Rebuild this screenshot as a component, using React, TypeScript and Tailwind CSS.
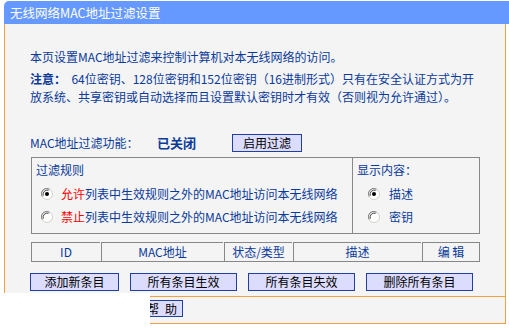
const Radio = ({ checked }: { checked?: boolean }) => (
  <svg width="12" height="12" viewBox="0 0 12 12" className="shrink-0">
    <circle cx="6" cy="6" r="5.5" fill="#ffffff" stroke="#d4d0c8" />
    <path d="M1.2 8.5 A5.3 5.3 0 0 1 8.5 1.2" fill="none" stroke="#808080" strokeWidth="1" />
    <path d="M2.3 7.6 A4.2 4.2 0 0 1 7.6 2.3" fill="none" stroke="#404040" strokeWidth="1" />
    {checked && <circle cx="6" cy="6" r="2" fill="#000000" />}
  </svg>
);

const Btn = ({ w, children }: { w: string; children: React.ReactNode }) => (
  <button
    type="button"
    className={`${w} h-[18px] shrink-0 border border-[#1f3fa3] bg-[#dcdcfe] text-black text-[12px] leading-[16px] text-center`}
  >
    {children}
  </button>
);

export default function App() {
  const cols = [
    { label: "ID", w: "w-[69px]" },
    { label: "MAC地址", w: "w-[122px]" },
    { label: "状态/类型", w: "w-[68px]" },
    { label: "描述", w: "w-[128px]" },
    { label: "编 辑", w: "w-[61px]" },
  ];

  return (
    <div className="relative w-[509px] h-[329px] overflow-hidden bg-white text-[12px] text-[#0a3a9a] font-['SimSun','Noto_Sans_CJK_SC',sans-serif]">
      {/* title */}
      <div className="mt-[1px] ml-[4px] w-[505px] h-[23px] rounded-tl-[5px] bg-[#6699ff] pl-[6px] leading-[23px] text-white text-[12.5px]">
        无线网络MAC地址过滤设置
      </div>

      {/* main panel */}
      <div className="ml-[4px] w-[502px] h-[273px] border-x border-b border-[#f5a040] bg-[#f4f4f4] pl-[25px] pt-[24px]">
        <p className="leading-[18px]">本页设置MAC地址过滤来控制计算机对本无线网络的访问。</p>
        <p className="mt-[4px] leading-[18px] whitespace-pre">
          <span className="font-bold">注意：</span>
          {"  64位密钥、128位密钥和152位密钥（16进制形式）只有在安全认证方式为开"}
          <br />
          放系统、共享密钥或自动选择而且设置默认密钥时才有效（否则视为允许通过）。
        </p>

        <div className="mt-[28px] flex h-[18px] items-center">
          <span className="w-[127px]">MAC地址过滤功能：</span>
          <span className="w-[75px] font-bold text-[13px]">已关闭</span>
          <Btn w="w-[70px]">启用过滤</Btn>
        </div>

        {/* filter box */}
        <div className="mt-[5px] ml-[1px] flex w-[449px] h-[77px] border border-[#888888]">
          <div className="w-[321px] border-r border-[#888888] pl-[4px] pt-[3px]">
            <div className="leading-[18px]">过滤规则</div>
            <div className="mt-[6px] flex h-[18px] items-center pl-[5px] gap-[8px]">
              <Radio checked />
              <span>
                <span className="text-[#ff0000]">允许</span>列表中生效规则之外的MAC地址访问本无线网络
              </span>
            </div>
            <div className="mt-[5px] flex h-[18px] items-center pl-[5px] gap-[8px]">
              <Radio />
              <span>
                <span className="text-[#ff0000]">禁止</span>列表中生效规则之外的MAC地址访问本无线网络
              </span>
            </div>
          </div>
          <div className="flex-1 pl-[4px] pt-[3px]">
            <div className="leading-[18px]">显示内容：</div>
            <div className="mt-[6px] flex h-[18px] items-center pl-[11px] gap-[9px]">
              <Radio checked />
              <span>描述</span>
            </div>
            <div className="mt-[5px] flex h-[18px] items-center pl-[11px] gap-[9px]">
              <Radio />
              <span>密钥</span>
            </div>
          </div>
        </div>

        {/* table header */}
        <div className="mt-[8px] ml-[1px] flex w-[449px] h-[20px] border-r border-b border-[#888888]">
          {cols.map((c) => (
            <div
              key={c.label}
              className={`${c.w} mr-[1px] border-l border-t border-[#888888] text-center leading-[18px] last:mr-0 last:flex-1`}
            >
              {c.label}
            </div>
          ))}
        </div>

        <div className="mt-[11px] flex gap-[11px]">
          <Btn w="w-[89px]">添加新条目</Btn>
          <Btn w="w-[107px]">所有条目生效</Btn>
          <Btn w="w-[107px]">所有条目失效</Btn>
          <Btn w="w-[107px]">删除所有条目</Btn>
        </div>
      </div>

      {/* help row */}
      <div className="ml-[4px] w-[502px] h-[27px] border-x border-b border-[#f5a040] bg-[#f4f4f4] pl-[136px] pt-[3px]">
        <button
          type="button"
          className="flex w-[42px] h-[17px] items-center justify-center border border-[#1f3fa3] bg-[#dcdcfe] text-black text-[12px] leading-[15px]"
        >
          <span>帮</span>
          <span className="ml-[6px]">助</span>
        </button>
      </div>

      {/* white cover over lower-left corner */}
      <div className="absolute left-0 top-[293px] w-[150px] h-[36px] bg-white" />
    </div>
  );
}
